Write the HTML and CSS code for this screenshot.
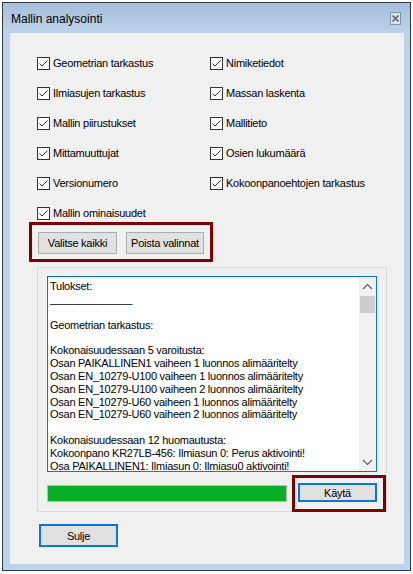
FILE: index.html
```html
<!DOCTYPE html>
<html lang="fi">
<head>
    <meta charset="UTF-8">
    <meta name="viewport" content="width=device-width, initial-scale=1.0">
    <title>Mallin analysointi</title>
    <link rel="stylesheet" href="styles.css">
</head>
<body>

    <div class="window">
        <div class="titlebar">
            <span class="title">Mallin analysointi</span>
            <span class="close-x">
                <svg width="9" height="9" viewBox="0 0 9 9"><path d="M1.5 1.5 L7.5 7.5 M7.5 1.5 L1.5 7.5" stroke="#5a6470" stroke-width="1.7"/></svg>
            </span>
        </div>

        <div class="client">
            <!-- Analysis options, filled column by column -->
            <div class="options">
                <label class="check"><svg class="box" width="13" height="13" viewBox="0 0 13 13"><rect x="0.5" y="0.5" width="12" height="12" fill="#fff" stroke="#333"/><path d="M2.5 6.5 L5 9 L10.5 3.5" fill="none" stroke="#333"/></svg>Geometrian tarkastus</label>
                <label class="check"><svg class="box" width="13" height="13" viewBox="0 0 13 13"><rect x="0.5" y="0.5" width="12" height="12" fill="#fff" stroke="#333"/><path d="M2.5 6.5 L5 9 L10.5 3.5" fill="none" stroke="#333"/></svg>Ilmiasujen tarkastus</label>
                <label class="check"><svg class="box" width="13" height="13" viewBox="0 0 13 13"><rect x="0.5" y="0.5" width="12" height="12" fill="#fff" stroke="#333"/><path d="M2.5 6.5 L5 9 L10.5 3.5" fill="none" stroke="#333"/></svg>Mallin piirustukset</label>
                <label class="check"><svg class="box" width="13" height="13" viewBox="0 0 13 13"><rect x="0.5" y="0.5" width="12" height="12" fill="#fff" stroke="#333"/><path d="M2.5 6.5 L5 9 L10.5 3.5" fill="none" stroke="#333"/></svg>Mittamuuttujat</label>
                <label class="check"><svg class="box" width="13" height="13" viewBox="0 0 13 13"><rect x="0.5" y="0.5" width="12" height="12" fill="#fff" stroke="#333"/><path d="M2.5 6.5 L5 9 L10.5 3.5" fill="none" stroke="#333"/></svg>Versionumero</label>
                <label class="check"><svg class="box" width="13" height="13" viewBox="0 0 13 13"><rect x="0.5" y="0.5" width="12" height="12" fill="#fff" stroke="#333"/><path d="M2.5 6.5 L5 9 L10.5 3.5" fill="none" stroke="#333"/></svg>Mallin ominaisuudet</label>
                <label class="check"><svg class="box" width="13" height="13" viewBox="0 0 13 13"><rect x="0.5" y="0.5" width="12" height="12" fill="#fff" stroke="#333"/><path d="M2.5 6.5 L5 9 L10.5 3.5" fill="none" stroke="#333"/></svg>Nimiketiedot</label>
                <label class="check"><svg class="box" width="13" height="13" viewBox="0 0 13 13"><rect x="0.5" y="0.5" width="12" height="12" fill="#fff" stroke="#333"/><path d="M2.5 6.5 L5 9 L10.5 3.5" fill="none" stroke="#333"/></svg>Massan laskenta</label>
                <label class="check"><svg class="box" width="13" height="13" viewBox="0 0 13 13"><rect x="0.5" y="0.5" width="12" height="12" fill="#fff" stroke="#333"/><path d="M2.5 6.5 L5 9 L10.5 3.5" fill="none" stroke="#333"/></svg>Mallitieto</label>
                <label class="check"><svg class="box" width="13" height="13" viewBox="0 0 13 13"><rect x="0.5" y="0.5" width="12" height="12" fill="#fff" stroke="#333"/><path d="M2.5 6.5 L5 9 L10.5 3.5" fill="none" stroke="#333"/></svg>Osien lukumäärä</label>
                <label class="check"><svg class="box" width="13" height="13" viewBox="0 0 13 13"><rect x="0.5" y="0.5" width="12" height="12" fill="#fff" stroke="#333"/><path d="M2.5 6.5 L5 9 L10.5 3.5" fill="none" stroke="#333"/></svg>Kokoonpanoehtojen tarkastus</label>
            </div>

            <div class="mark select-mark">
                <button class="btn">Valitse kaikki</button>
                <button class="btn">Poista valinnat</button>
            </div>

            <div class="panel">
                <div class="results">
                    <div class="results-text">Tulokset:
______________

Geometrian tarkastus:

Kokonaisuudessaan 5 varoitusta:
Osan PAIKALLINEN1 vaiheen 1 luonnos alimääritelty
Osan EN_10279-U100 vaiheen 1 luonnos alimääritelty
Osan EN_10279-U100 vaiheen 2 luonnos alimääritelty
Osan EN_10279-U60 vaiheen 1 luonnos alimääritelty
Osan EN_10279-U60 vaiheen 2 luonnos alimääritelty

Kokonaisuudessaan 12 huomautusta:
Kokoonpano KR27LB-456: Ilmiasun 0: Perus aktivointi!
Osa PAIKALLINEN1: Ilmiasun 0: Ilmiasu0 aktivointi!
Osa EN_10279-U100: Ilmiasun 0: Ilmiasu0 aktivointi!</div>
                    <div class="scrollbar">
                        <div class="arrow"><svg width="17" height="17" viewBox="0 0 17 17"><polyline points="4,12 8.5,7.5 13,12" fill="none" stroke="#606060" stroke-width="1.2"/></svg></div>
                        <div class="thumb"></div>
                        <div class="track"></div>
                        <div class="arrow"><svg width="17" height="17" viewBox="0 0 17 17"><polyline points="4,6 8.5,10.5 13,6" fill="none" stroke="#606060" stroke-width="1.2"/></svg></div>
                    </div>
                </div>

                <div class="run-row">
                    <div class="progress"><div class="progress-fill" style="width: 100%"></div></div>
                    <div class="mark run-mark">
                        <button class="btn focused">Käytä</button>
                    </div>
                </div>
            </div>

            <button class="btn focused close-btn">Sulje</button>
        </div>
    </div>

</body>
</html>
```

FILE: styles.css
```css
* {
    margin: 0;
    padding: 0;
    box-sizing: border-box;
}

body {
    font-family: 'Liberation Sans', Arial, sans-serif;
    font-size: 11px;
    letter-spacing: -0.25px;
    color: #000;
    background-color: #fff;
}

/* Window frame */
.window {
    width: 409px;
    height: 569px;
    margin: 2px 0 0 2px;
    border: 1px solid #2c3a46;
    background: linear-gradient(#a5bedb, #bcd3ec 30px, #bcd3ec);
    padding: 0 6px 6px 7px;
    display: flex;
    flex-direction: column;
}

.titlebar {
    height: 30px;
    flex-shrink: 0;
    display: flex;
    align-items: center;
    justify-content: space-between;
    padding: 1px 3px 0 1px;
}

.title {
    font-size: 12px;
    letter-spacing: 0;
}

.close-x {
    width: 11px;
    height: 13px;
    border: 1px solid #8393a6;
    background-color: #d9e4f1;
    display: flex;
    align-items: center;
    justify-content: center;
}

.client {
    flex: 1;
    background-color: #f0f0f0;
}

/* Checkbox grid */
.options {
    margin: 24px 0 0 27px;
    display: grid;
    grid-template-columns: 173px auto;
    grid-template-rows: repeat(6, 13px);
    grid-auto-flow: column;
    row-gap: 17px;
}

.check {
    display: flex;
    align-items: center;
    gap: 3px;
    line-height: 13px;
    white-space: nowrap;
}

.box {
    flex-shrink: 0;
}

/* Buttons */
.btn {
    font: inherit;
    letter-spacing: inherit;
    color: #000;
    background-color: #e1e1e1;
    border: 1px solid #adadad;
    width: 79px;
    height: 22px;
}

.btn.focused {
    border: 2px solid #0078d7;
}

/* Dark red highlight frames */
.mark {
    border: 3px solid #7d0000;
}

.select-mark {
    width: 184px;
    height: 40px;
    margin: 2px 0 0 19px;
    padding: 7px 6px 5px 6px;
    display: flex;
    gap: 9px;
}

.select-mark .btn:last-child {
    width: 78px;
}

/* Results group */
.panel {
    width: 350px;
    margin: 5px 0 0 27px;
    border: 1px solid #dadada;
    padding: 8px 0 0 9px;
}

.results {
    height: 196px;
    margin-right: 9px;
    border: 1px solid #0078d7;
    background-color: #fff;
    display: flex;
    overflow: hidden;
}

.results-text {
    flex: 1;
    padding: 3px 0 0 2px;
    line-height: 12.85px;
    white-space: pre;
    overflow: hidden;
}

.scrollbar {
    width: 17px;
    flex-shrink: 0;
    background-color: #f0f0f0;
    display: flex;
    flex-direction: column;
}

.arrow {
    height: 17px;
}

.arrow svg {
    display: block;
}

.thumb {
    height: 17px;
    margin: 2px 1px 0 1px;
    background-color: #cdcdcd;
}

.track {
    flex: 1;
}

.run-row {
    margin: 3px 0 -1px 0;
    display: flex;
    align-items: center;
    gap: 5px;
}

.progress {
    width: 240px;
    height: 17px;
    border: 1px solid #bcbcbc;
    background-color: #e6e6e6;
}

.progress-fill {
    height: 100%;
    background-color: #06b025;
}

.run-mark {
    width: 94px;
    height: 37px;
    padding: 5px 6px 7px 3px;
}

.run-mark .btn {
    height: 19px;
}

.close-btn {
    height: 23px;
    margin: 12px 0 0 29px;
}
```
